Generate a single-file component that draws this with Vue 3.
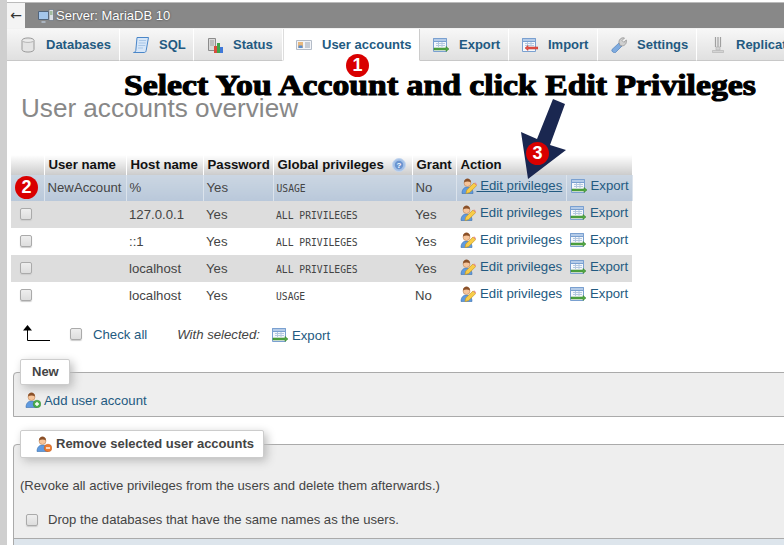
<template>
  <div class="page">
    <svg class="defs" aria-hidden="true">
      <defs>
        <symbol id="i-db" viewBox="0 0 16 16">
          <path d="M2 3.500c0-3.400 12-3.400 12 0v9c0 3.400-12 3.400-12 0z" fill="#e4e4e4" stroke="#9a9a9a" />
          <path d="M2 3.500c0 2.400 12 2.400 12 0" fill="#f4f4f4" stroke="#b0b0b0" />
        </symbol>
        <symbol id="i-sql" viewBox="0 0 16 16">
          <path d="M4 .5h11.500l-2.300 13c-.2 1.400-1 2-2 2H.5c1 0 2.100-.7 2.300-2z" fill="#d6e6f8" stroke="#4a86c8" />
          <path d="M6 3.500h7M5.700 6h7M5.300 8.500h7M5 11h5" stroke="#a8c6e6" />
        </symbol>
        <symbol id="i-status" viewBox="0 0 16 16">
          <path d="M1.500 1.500h7v12h-7z" fill="#dadada" stroke="#8c8c8c" />
          <path d="M3 4h4M3 6h4M3 8h4" stroke="#a0a0a0" />
          <path d="M7 9h3v7H7z" fill="#d84b3c" /><path d="M10 6h3v10h-3z" fill="#3fa34a" /><path d="M13 10h3v6h-3z" fill="#3f78d8" />
        </symbol>
        <symbol id="i-card" viewBox="0 0 16 16">
          <path d="M.5 3.500h15v9H.5z" fill="#f2f4f8" stroke="#b4bcc8" />
          <path d="M2 5h5v6H2z" fill="#e8b87e" /><path d="M2.500 8.500h4V11h-4z" fill="#5a8fd0" />
          <path d="M9 6h5M9 8h5M9 10h5" stroke="#98a2b2" />
        </symbol>
        <symbol id="i-export" viewBox="0 0 16 16">
          <path d="M.5 1.500h13v13H.5z" fill="#f5f8fc" stroke="#7aa0d0" />
          <path d="M.5 1.500h13v3H.5z" fill="#b4cbe8" stroke="#7aa0d0" />
          <path d="M3 6.500h9M3 8.500h9M5.500 5v5M9 5v5" stroke="#b4c8e0" />
          <path d="M1 11h12V9.500l3 2.500-3 2.500V13H1z" fill="#52a844" stroke="#348029" stroke-width=".5" />
        </symbol>
        <symbol id="i-import" viewBox="0 0 16 16">
          <path d="M.5 1.500h13v13H.5z" fill="#f5f8fc" stroke="#7aa0d0" />
          <path d="M.5 1.500h13v3H.5z" fill="#b4cbe8" stroke="#7aa0d0" />
          <path d="M3 6.500h9M3 8.500h9M5.500 5v3M9 5v3" stroke="#b4c8e0" />
          <path d="M16 10H6V8.500L3 11l3 2.500V12h10z" fill="#e8544a" stroke="#b83028" stroke-width=".5" />
        </symbol>
        <symbol id="i-wrench" viewBox="0 0 16 16">
          <path d="M1 12.500 8 6l3 3-6.500 6.500c-1.500 1-4.500-1.500-3.500-3z" fill="#7fabdf" stroke="#4f80ba" stroke-width=".7" />
          <path d="M8 6c-.5-3 2-6 5.500-5L11 3.500l1.800 1.800L15.300 3c.8 3.500-2 6.500-5 5.800L9.500 9z" fill="#d0d0d0" stroke="#8a8a8a" stroke-width=".7" />
        </symbol>
        <symbol id="i-repl" viewBox="0 0 16 16">
          <path d="M5.500 0v10M8 0v10M10.500 0v10" stroke="#a0a0a0" stroke-width="1.200" />
          <path d="M6 10h4v3H6zM2.500 13.500h11v2h-11z" fill="#d4d4d4" stroke="#b0b0b0" stroke-width=".6" />
        </symbol>
        <symbol id="i-person" viewBox="0 0 16 16">
          <path d="M1 15.500c0-4 2-6.500 5.500-6.500s5.500 2.500 5.500 6.500z" fill="#5f9ae0" stroke="#3b70ad" stroke-width=".6" />
          <circle cx="6.500" cy="5" r="3.500" fill="#f6c49a" stroke="#b47a4c" stroke-width=".5" />
          <path d="M3 4.500C3 1.500 5 .5 6.500 .5S10 1.500 10 4.500C8 3 5 3 3 4.500z" fill="#8a5028" />
        </symbol>
        <symbol id="i-edit" viewBox="0 0 16 16">
          <use href="#i-person" />
          <path d="M5 15.500l.8-3.600L13 5l2.600 2.600-7 7z" fill="#f8cc48" stroke="#c89a20" stroke-width=".7" />
          <path d="M13 5l2.600 2.600 .4-1.400L14.400 4.600z" fill="#e89090" />
        </symbol>
        <symbol id="i-add" viewBox="0 0 16 16">
          <use href="#i-person" />
          <circle cx="12" cy="12" r="3.800" fill="#4fb04f" stroke="#338533" stroke-width=".5" />
          <path d="M12 10v4M10 12h4" stroke="#fff" stroke-width="1.400" />
        </symbol>
        <symbol id="i-remove" viewBox="0 0 16 16">
          <use href="#i-person" />
          <circle cx="12" cy="12" r="3.800" fill="#ec7c32" stroke="#bc5a1e" stroke-width=".5" />
          <path d="M10 12h4" stroke="#fff" stroke-width="1.400" />
        </symbol>
      </defs>
    </svg>

    <div class="content">
      <div class="server-bar">
        <a class="back">←</a>
        <svg class="server-icon" viewBox="0 0 16 16">
          <path d="M.5 3.500h10v8H.5z" fill="#a4c6ec" stroke="#52657c" />
          <path d="M3.500 13h4v2h-4z" fill="#aab4c0" />
          <path d="M11 1.500h4.500v11H11z" fill="#dce1e6" stroke="#6a7480" stroke-width=".7" />
          <path d="M12 4h2.500M12 6h2.500" stroke="#6a9a5a" />
        </svg>
        <span class="server-name">Server: MariaDB 10</span>
      </div>

      <nav class="tabs">
        <a
          v-for="tab in tabs"
          :key="tab.label"
          class="tab"
          :class="{ active: tab.active }"
          :style="{ width: tab.width + 'px' }"
        >
          <svg class="icon"><use :href="'#' + tab.icon" /></svg>
          {{ tab.label }}
        </a>
      </nav>

      <h2 class="title">User accounts overview</h2>

      <table class="users">
        <colgroup>
          <col class="c-check" /><col class="c-user" /><col class="c-host" /><col class="c-pass" />
          <col class="c-priv" /><col class="c-grant" /><col class="c-edit" /><col class="c-exp" />
        </colgroup>
        <thead>
          <tr>
            <th></th>
            <th>User name</th>
            <th>Host name</th>
            <th>Password</th>
            <th>
              Global privileges
              <svg class="help" viewBox="0 0 14 14">
                <circle cx="7" cy="7" r="6.500" fill="#a4c0e6" stroke="#c4d6ee" />
                <circle cx="7" cy="7" r="4.200" fill="#6a94d0" />
                <text x="7" y="9.800" text-anchor="middle" font-size="8" font-weight="700" fill="#fff" font-family="Liberation Sans">?</text>
              </svg>
            </th>
            <th>Grant</th>
            <th colspan="2">Action</th>
          </tr>
        </thead>
        <tbody>
          <tr v-for="(row, i) in rows" :key="i" :class="{ marked: i === 0, odd: i % 2 === 1 }">
            <td class="check"><span v-if="i > 0" class="box"></span></td>
            <td>{{ row.user }}</td>
            <td>{{ row.host }}</td>
            <td>{{ row.pass }}</td>
            <td><code>{{ row.priv }}</code></td>
            <td>{{ row.grant }}</td>
            <td class="act">
              <a class="link">
                <svg class="icon"><use href="#i-edit" /></svg>
                <span class="lbl">{{ i === 0 ? "\u00a0Edit privileges" : "Edit privileges" }}</span>
              </a>
            </td>
            <td class="act">
              <a class="link">
                <svg class="icon"><use href="#i-export" /></svg>
                <span class="lbl">Export</span>
              </a>
            </td>
          </tr>
        </tbody>
      </table>

      <div class="with-selected">
        <svg class="arrow-up" viewBox="0 0 28 16">
          <path d="M5.500 15.500V4M5.500 15.500H28" fill="none" stroke="#000" />
          <path d="M1 5.500 5.500 0 10 5.500z" fill="#000" />
        </svg>
        <span class="box"></span>
        <span class="check-all">Check all</span>
        <em>With selected:</em>
        <a class="link">
          <svg class="icon"><use href="#i-export" /></svg>
          Export
        </a>
      </div>

      <fieldset class="group first">
        <legend>New</legend>
        <a class="link add">
          <svg class="icon"><use href="#i-add" /></svg>
          Add user account
        </a>
      </fieldset>

      <fieldset class="group second">
        <legend class="wide">
          <svg class="icon"><use href="#i-remove" /></svg>
          Remove selected user accounts
        </legend>
        <p class="note">(Revoke all active privileges from the users and delete them afterwards.)</p>
        <label class="drop"><span class="box"></span> Drop the databases that have the same names as the users.</label>
        <div class="foot"></div>
      </fieldset>
    </div>

    <!-- tutorial annotations painted over the screenshot -->
    <div class="headline">Select You Account and click Edit Privileges</div>
    <svg class="big-arrow" viewBox="0 0 60 90">
      <path d="M38 1 50 6 35 47 51 52 13 81 6 34 22 41z" fill="#1a2750" />
    </svg>
    <span class="badge b1">1</span>
    <span class="badge b2">2</span>
    <span class="badge b3">3</span>
  </div>
</template>

<script setup>
const tabs = [
  { label: "Databases", icon: "i-db", width: 113 },
  { label: "SQL", icon: "i-sql", width: 74 },
  { label: "Status", icon: "i-status", width: 89 },
  { label: "User accounts", icon: "i-card", width: 137, active: true },
  { label: "Export", icon: "i-export", width: 89 },
  { label: "Import", icon: "i-import", width: 89 },
  { label: "Settings", icon: "i-wrench", width: 99 },
  { label: "Replication", icon: "i-repl", width: 120 },
];

const rows = [
  { user: "NewAccount", host: "%", pass: "Yes", priv: "USAGE", grant: "No" },
  { user: "", host: "127.0.0.1", pass: "Yes", priv: "ALL PRIVILEGES", grant: "Yes" },
  { user: "", host: "::1", pass: "Yes", priv: "ALL PRIVILEGES", grant: "Yes" },
  { user: "", host: "localhost", pass: "Yes", priv: "ALL PRIVILEGES", grant: "Yes" },
  { user: "", host: "localhost", pass: "Yes", priv: "USAGE", grant: "No" },
];
</script>

<style>
html,
body {
  margin: 0;
  background: #fff;
}
</style>

<style scoped>
.page {
  position: relative;
  width: 784px;
  height: 545px;
  overflow: hidden;
  background: #fff;
  font-family: "Liberation Sans", Arial, sans-serif;
  font-size: 13.2px;
  color: #444;
  box-sizing: border-box;
  padding-left: 7px;
}

.page::before {
  content: "";
  position: absolute;
  left: 0;
  top: 0;
  bottom: 0;
  width: 7px;
  background: #cfcfcf;
}

.defs {
  position: absolute;
  width: 0;
  height: 0;
}

.content {
  width: 900px;
}

.icon {
  width: 16px;
  height: 16px;
  flex: none;
}

.server-bar {
  display: flex;
  align-items: center;
  height: 25px;
  margin-top: 2px;
  border-top: 1px solid #bbb;
  background: #888;
  color: #fff;
}

.back {
  width: 18px;
  height: 25px;
  line-height: 25px;
  text-align: center;
  background: #f4f4f4;
  color: #333;
  font-family: "DejaVu Sans", sans-serif;
  font-size: 14px;
}

.server-icon {
  width: 16px;
  height: 16px;
  margin-left: 13px;
}

.server-name {
  margin-left: 2px;
  font-size: 13px;
  text-shadow: 0 0 2px #333;
}

.tabs {
  display: flex;
  height: 32px;
  border-top: 1px solid #f2f2f2;
}

.tab {
  display: flex;
  flex: none;
  align-items: center;
  gap: 10px;
  box-sizing: border-box;
  padding-left: 13px;
  border-right: 1px solid #fff;
  border-bottom: 1px solid #c8c8c8;
  background: linear-gradient(#f7f7f7, #e0e0e0);
  color: #235a81;
  font-size: 13px;
  font-weight: 700;
  white-space: nowrap;
}

.tab.active {
  background: #fff;
  border-bottom-color: #fff;
  border-left: 1px solid #ddd;
  border-right: 1px solid #ccc;
  padding-left: 12px;
}

.title {
  margin: 32px 0 0 14px;
  font-size: 26.1px;
  line-height: 30px;
  font-weight: 400;
  color: #888;
}

.users {
  margin: 32px 0 0 4px;
  width: 621px;
  table-layout: fixed;
  border-collapse: collapse;
}

.c-check { width: 33px; }
.c-user { width: 82px; }
.c-host { width: 77px; }
.c-pass { width: 70px; }
.c-priv { width: 139px; }
.c-grant { width: 44px; }
.c-edit { width: 110px; }
.c-exp { width: 66px; }

th {
  height: 20px;
  box-sizing: border-box;
  padding: 0 0 2px 4px;
  text-align: left;
  font-weight: 700;
  color: #111;
  background: linear-gradient(#fff, #ccc);
  border-right: 1px solid #fff;
  white-space: nowrap;
}

.help {
  width: 14px;
  height: 14px;
  margin-left: 5px;
  vertical-align: -3px;
}

td {
  height: 27px;
  padding: 0 0 0 3px;
  white-space: nowrap;
}

tbody tr.odd td {
  background: #ddd;
}

tbody tr.marked td {
  height: 26px;
  box-sizing: border-box;
  padding-bottom: 1px;
  background: linear-gradient(#cbd6e2, #b9c8da);
  border-right: 1px solid #dbe3ec;
}

code {
  font-family: "DejaVu Sans Mono", monospace;
  font-size: 9.7px;
}

.check {
  padding-left: 9px;
}

.box {
  display: inline-block;
  flex: none;
  width: 10px;
  height: 10px;
  border: 1px solid #aaa;
  border-radius: 2px;
  background: linear-gradient(#eee, #ddd);
  box-shadow: 0 1px 1px #ccc;
  vertical-align: -1px;
}

.link {
  display: inline-flex;
  align-items: center;
  color: #235a81;
  white-space: nowrap;
}

.act {
  padding-left: 4px;
}

.act .lbl {
  margin-left: 4px;
  position: relative;
  top: -1px;
}

.marked .act:nth-child(7) .lbl {
  margin-left: 0;
  text-decoration: underline;
}

.with-selected {
  display: flex;
  align-items: center;
  height: 20px;
  margin: 15px 0 0 15px;
}

.arrow-up {
  width: 28px;
  height: 16px;
  margin-top: -2px;
}

.with-selected .box {
  margin-left: 20px;
}

.check-all {
  margin-left: 11px;
  color: #235a81;
}

.with-selected em {
  margin-left: 30px;
  color: #444;
}

.with-selected .link {
  margin-left: 12px;
  gap: 4px;
  margin-top: 2px;
}

.group {
  margin: 0 0 0 6px;
  padding: 0;
  border: 1px solid #aaa;
  border-radius: 4px 0 0 0;
  background: #eee;
  min-width: 0;
  width: 860px;
  box-sizing: border-box;
}

.first {
  margin-top: 15px;
  height: 58px;
}

legend {
  margin-left: 6px;
  padding: 0 10px 0 11px;
  height: 26px;
  box-sizing: border-box;
  line-height: 24px;
  font-size: 13px;
  font-weight: 700;
  color: #444;
  background: #fff;
  border: 1px solid #ccc;
  border-radius: 2px;
  box-shadow: 3px 3px 10px #bbb;
  display: flex;
  align-items: center;
  gap: 4px;
}

.wide {
  height: 28px;
  padding: 0 9px 0 15px;
}

.add {
  margin: 7px 0 0 11px;
  gap: 3px;
}

.second {
  margin-top: 13px;
  height: 140px;
}

.note {
  margin: 20px 0 0 6px;
  line-height: 16px;
  font-size: 13.1px;
}

.drop {
  display: flex;
  align-items: center;
  gap: 10px;
  margin: 18px 0 0 12px;
  line-height: 16px;
  font-size: 13.1px;
}

.foot {
  margin-top: 10px;
  height: 30px;
  border-top: 1px solid #aaa;
  background: #dde5ec;
}

.headline {
  position: absolute;
  left: 124px;
  top: 67px;
  font-family: "Liberation Serif", serif;
  font-size: 30px;
  line-height: 36px;
  font-weight: 700;
  color: #000;
  -webkit-text-stroke: 1.1px #000;
  white-space: nowrap;
  transform: scaleX(1.124);
  transform-origin: left center;
}

.big-arrow {
  position: absolute;
  left: 515px;
  top: 98px;
  width: 60px;
  height: 90px;
}

.badge {
  position: absolute;
  width: 23px;
  height: 23px;
  border-radius: 50%;
  background: #d90000;
  color: #fff;
  font-size: 18px;
  font-weight: 700;
  line-height: 23px;
  text-align: center;
}

.b1 { left: 346px; top: 54px; }
.b2 { left: 15px; top: 176px; }
.b3 { left: 526px; top: 142px; }
</style>
